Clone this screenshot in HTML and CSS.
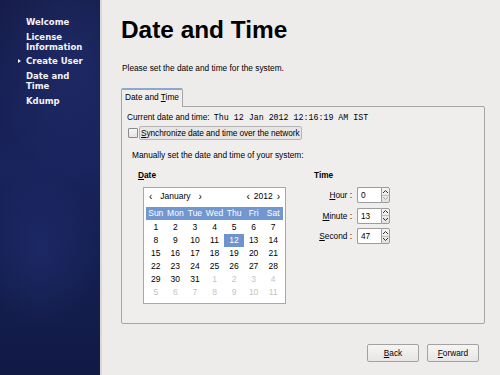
FILE: index.html
```html
<!DOCTYPE html>
<html>
<head>
<meta charset="utf-8">
<link rel="stylesheet" href="styles.css">
</head>
<body>
<div class="app">
  <aside class="sidebar">
    <ul class="steps">
      <li>Welcome</li>
      <li>License<br>Information</li>
      <li class="current">Create User</li>
      <li>Date and<br>Time</li>
      <li>Kdump</li>
    </ul>
  </aside>
  <main class="main">
    <h1 class="title">Date and Time</h1>
    <p class="intro">Please set the date and time for the system.</p>
    <div class="notebook">
      <div class="tabs"><div class="tab">Date and <u>T</u>ime</div></div>
      <div class="panel">
        <div class="current-time">Current date and time: <span class="mono">Thu 12 Jan 2012 12:16:19 AM IST</span></div>
        <div class="sync"><span class="checkbox"></span><span class="sync-label"><u>S</u>ynchronize date and time over the network</span></div>
        <div class="manual">
          <p class="manual-text">Manually set the date and time of your system:</p>
          <div class="cols">
            <div class="date-col">
              <div class="col-title"><u>D</u>ate</div>
              <div class="calendar">
                <div class="cal-head">
                  <span class="nav"><span class="arr">‹</span><span class="month">January</span><span class="arr">›</span></span>
                  <span class="nav"><span class="arr">‹</span><span class="year">2012</span><span class="arr">›</span></span>
                </div>
                <div class="cal-grid">
                  <span class="dn">Sun</span><span class="dn">Mon</span><span class="dn">Tue</span><span class="dn">Wed</span><span class="dn">Thu</span><span class="dn">Fri</span><span class="dn">Sat</span>
                  <span>1</span><span>2</span><span>3</span><span>4</span><span>5</span><span>6</span><span>7</span>
                  <span>8</span><span>9</span><span>10</span><span>11</span><span class="sel">12</span><span>13</span><span>14</span>
                  <span>15</span><span>16</span><span>17</span><span>18</span><span>19</span><span>20</span><span>21</span>
                  <span>22</span><span>23</span><span>24</span><span>25</span><span>26</span><span>27</span><span>28</span>
                  <span>29</span><span>30</span><span>31</span><span class="other">1</span><span class="other">2</span><span class="other">3</span><span class="other">4</span>
                  <span class="other">5</span><span class="other">6</span><span class="other">7</span><span class="other">8</span><span class="other">9</span><span class="other">10</span><span class="other">11</span>
                </div>
              </div>
            </div>
            <div class="time-col">
              <div class="col-title">Time</div>
              <div class="time-rows">
                <div class="trow"><span class="tlabel"><u>H</u>our :</span><span class="spin"><span class="entry">0</span><span class="stepper"><span class="step"><svg width="7" height="5" viewBox="0 0 7 5"><path d="M1 4 L3.5 1.5 L6 4" fill="none" stroke="#333" stroke-width="1"/></svg></span><span class="step"><svg width="7" height="5" viewBox="0 0 7 5"><path d="M1 1 L3.5 3.5 L6 1" fill="none" stroke="#aaa" stroke-width="1"/></svg></span></span></span></div>
                <div class="trow"><span class="tlabel"><u>M</u>inute :</span><span class="spin"><span class="entry">13</span><span class="stepper"><span class="step"><svg width="7" height="5" viewBox="0 0 7 5"><path d="M1 4 L3.5 1.5 L6 4" fill="none" stroke="#333" stroke-width="1"/></svg></span><span class="step"><svg width="7" height="5" viewBox="0 0 7 5"><path d="M1 1 L3.5 3.5 L6 1" fill="none" stroke="#333" stroke-width="1"/></svg></span></span></span></div>
                <div class="trow"><span class="tlabel"><u>S</u>econd :</span><span class="spin"><span class="entry">47</span><span class="stepper"><span class="step"><svg width="7" height="5" viewBox="0 0 7 5"><path d="M1 4 L3.5 1.5 L6 4" fill="none" stroke="#333" stroke-width="1"/></svg></span><span class="step"><svg width="7" height="5" viewBox="0 0 7 5"><path d="M1 1 L3.5 3.5 L6 1" fill="none" stroke="#333" stroke-width="1"/></svg></span></span></span></div>
              </div>
            </div>
          </div>
        </div>
      </div>
    </div>
    <div class="buttons">
      <button class="btn"><u>B</u>ack</button>
      <button class="btn"><u>F</u>orward</button>
    </div>
  </main>
</div>
</body>
</html>
```
FILE: styles.css
```css
html, body {
  margin: 0;
  padding: 0;
  width: 500px;
  height: 375px;
  overflow: hidden;
}
body {
  font-family: "Liberation Sans", Arial, sans-serif;
  color: #000;
  background: #edecea;
}
.app {
  display: flex;
  width: 500px;
  height: 375px;
}
.sidebar {
  width: 100px;
  flex: none;
  background:
    radial-gradient(ellipse 80px 120px at 70px 60px, rgba(40, 55, 130, 0.4), rgba(0, 0, 0, 0)),
    radial-gradient(ellipse 60px 80px at 40px 250px, rgba(40, 60, 140, 0.3), rgba(0, 0, 0, 0)),
    linear-gradient(180deg, #161d4a 0%, #19235c 45%, #111a44 100%);
  border-right: 2px solid #d9d8d6;
}
.steps {
  list-style: none;
  margin: 0;
  padding: 17px 0 0 26px;
  font-family: "DejaVu Sans", sans-serif;
  font-weight: bold;
  font-size: 8.5px;
  line-height: 10px;
  color: #f2f3f8;
}
.steps li {
  position: relative;
  margin-bottom: 4.7px;
}
.steps li.current::before {
  content: "";
  position: absolute;
  left: -8px;
  top: 3px;
  border-left: 3px solid #f2f3f8;
  border-top: 2px solid transparent;
  border-bottom: 2px solid transparent;
}
.main {
  flex: 1;
  padding-left: 19px;
  display: flex;
  flex-direction: column;
}
.title {
  margin: 0;
  padding-top: 16px;
  font-size: 24.4px;
  line-height: 28px;
  font-weight: bold;
}
.intro {
  margin: 18px 0 0 1px;
  font-size: 8.3px;
  line-height: 12px;
}
.notebook {
  margin-top: 14px;
  width: 364px;
}
.tabs {
  display: flex;
  height: 18px;
}
.tab {
  box-sizing: border-box;
  width: 62px;
  height: 19px;
  border: 1px solid #a6a6a6;
  border-top: 2px solid #8ea7cc;
  border-bottom: none;
  border-radius: 2px 2px 0 0;
  background: #efeeec;
  font-size: 8.3px;
  line-height: 15px;
  padding-left: 3px;
  position: relative;
  z-index: 1;
}
.panel {
  box-sizing: border-box;
  height: 218px;
  border: 1px solid #a6a6a6;
  border-radius: 0 2px 2px 2px;
  background: #efeeec;
  padding: 4px 0 0 5px;
  font-size: 8.3px;
}
.current-time {
  line-height: 12px;
}
.mono {
  font-family: "Liberation Mono", "Courier New", monospace;
  font-size: 8.3px;
  margin-left: 2px;
}
.sync {
  display: flex;
  align-items: center;
  margin-top: 2px;
  height: 14px;
}
.checkbox {
  box-sizing: border-box;
  width: 10px;
  height: 10px;
  margin-left: 1px;
  border: 1px solid #8a8a8a;
  border-radius: 1px;
  background: linear-gradient(#f6f6f6, #e4e4e4);
}
.sync-label {
  box-sizing: border-box;
  height: 14px;
  margin-left: 1px;
  padding: 0 1px 0 1px;
  white-space: nowrap;
  letter-spacing: -0.08px;
  border: 1px solid #b4b4b4;
  border-radius: 2px;
  background: #e7e6e4;
  line-height: 12px;
}
.manual {
  padding-left: 5px;
}
.manual-text {
  margin: 9px 0 0 0;
  line-height: 12px;
}
.cols {
  display: flex;
  margin-top: 8px;
}
.date-col {
  padding-left: 6px;
  width: 170px;
}
.col-title {
  font-weight: bold;
  line-height: 12px;
}
.calendar {
  box-sizing: border-box;
  margin-top: 6px;
  margin-left: 5px;
  width: 143px;
  height: 117px;
  border: 1px solid #a8a8a8;
  background: #fff;
  padding: 0 2px;
}
.cal-head {
  display: flex;
  justify-content: space-between;
  height: 17px;
  line-height: 17px;
  font-size: 8.5px;
}
.nav {
  display: flex;
  align-items: center;
}
.arr {
  font-size: 10px;
  padding: 0 3px;
}
.month {
  padding: 0 5px;
}
.year {
  padding: 0 1px;
}
.cal-grid {
  display: grid;
  grid-template-columns: repeat(7, 1fr);
  grid-auto-rows: 13px;
  margin-top: 2px;
  font-size: 8.5px;
  text-align: center;
  line-height: 13px;
}
.cal-grid .dn {
  background: #7297d0;
  color: #fff;
}
.cal-grid .sel {
  background: #6f93cc;
  color: #fff;
}
.cal-grid .other {
  color: #c4c4c4;
}
.cal-grid > span:nth-child(n+8) {
  position: relative;
  top: 1px;
}
.time-col {
  padding-left: 6px;
}
.time-rows {
  margin-top: 6px;
  display: flex;
  flex-direction: column;
  gap: 4.5px;
}
.trow {
  display: flex;
  align-items: center;
  height: 16px;
}
.tlabel {
  width: 38px;
  text-align: right;
  padding-right: 5px;
}
.spin {
  display: flex;
  height: 16px;
}
.entry {
  box-sizing: border-box;
  width: 24px;
  height: 16px;
  border: 1px solid #9c9c9c;
  border-right: none;
  border-radius: 2px 0 0 2px;
  background: #fff;
  padding-left: 3px;
  line-height: 14px;
}
.stepper {
  box-sizing: border-box;
  width: 9px;
  height: 16px;
  border: 1px solid #9c9c9c;
  border-radius: 0 2px 2px 0;
  background: linear-gradient(#f4f4f4, #e2e2e2);
  display: flex;
  flex-direction: column;
}
.step {
  flex: 1;
  display: flex;
  align-items: center;
  justify-content: center;
}
.step:first-child {
  border-bottom: 1px solid #c0c0c0;
}
.step svg {
  display: block;
}
.buttons {
  display: flex;
  justify-content: flex-end;
  gap: 8px;
  margin-top: 20px;
  margin-right: 21px;
}
.btn {
  box-sizing: border-box;
  width: 52px;
  height: 18px;
  border: 1px solid #a2a2a2;
  border-radius: 2px;
  background: linear-gradient(#f5f5f4, #e7e6e4);
  font-family: "Liberation Sans", Arial, sans-serif;
  font-size: 8.3px;
  color: #000;
  padding: 0;
}
```
